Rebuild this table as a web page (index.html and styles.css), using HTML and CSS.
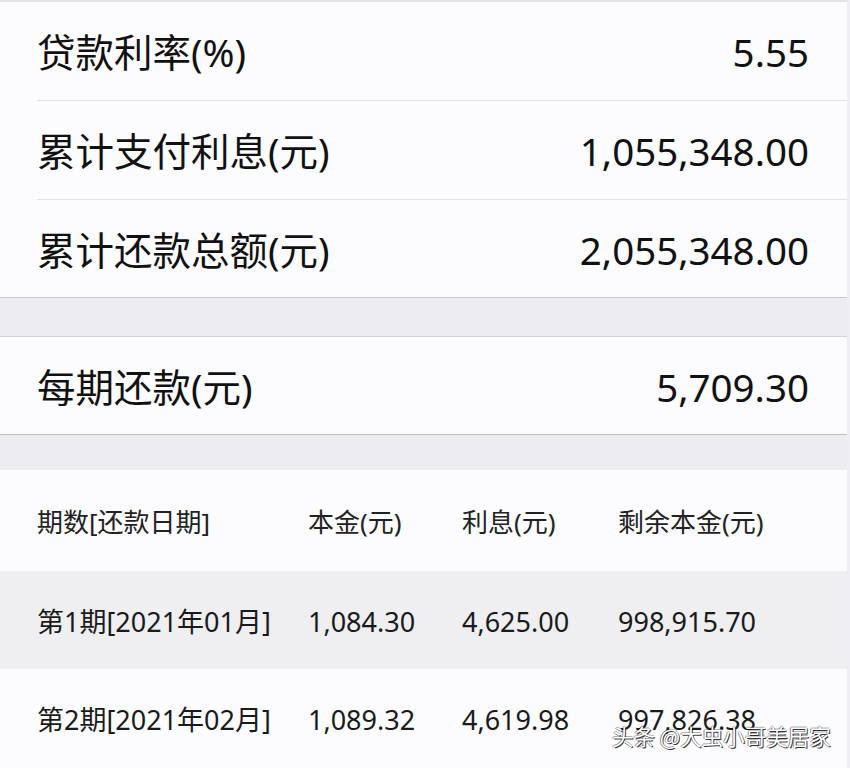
FILE: index.html
```html
<!DOCTYPE html>
<html lang="zh-CN">
<head>
<meta charset="utf-8">
<title>贷款计算结果</title>
<link rel="stylesheet" href="styles.css">
</head>
<body>
<div class="page">
  <section class="card card-top">
    <div class="row"><span class="label">贷款利率(%)</span><span class="value">5.55</span></div>
    <div class="row"><span class="label">累计支付利息(元)</span><span class="value">1,055,348.00</span></div>
    <div class="row last"><span class="label">累计还款总额(元)</span><span class="value">2,055,348.00</span></div>
  </section>
  <div class="gap gap-a"></div>
  <section class="card card-mid">
    <div class="row last"><span class="label">每期还款(元)</span><span class="value">5,709.30</span></div>
  </section>
  <div class="gap gap-b"></div>
  <section class="table">
    <div class="trow thead">
      <span>期数[还款日期]</span><span>本金(元)</span><span>利息(元)</span><span>剩余本金(元)</span>
    </div>
    <div class="trow shaded">
      <span>第1期[2021年01月]</span><span>1,084.30</span><span>4,625.00</span><span>998,915.70</span>
    </div>
    <div class="trow">
      <span>第2期[2021年02月]</span><span>1,089.32</span><span>4,619.98</span><span>997,826.38</span>
    </div>
  </section>
  <div class="watermark">头条 @大虫小哥美居家</div>
</div>
</body>
</html>
```
FILE: styles.css
```css
html, body {
  margin: 0;
  padding: 0;
  background: #fcfbfd;
}
body {
  font-family: "Noto Sans", "Noto Sans CJK SC", sans-serif;
  color: #111;
}
.page {
  position: relative;
  width: 847px;
  height: 768px;
  overflow: hidden;
  border-right: 3px solid #efeef2;
}
.card {
  background: #fcfbfd;
}
.card-top {
  border-top: 2px solid #e4e3e8;
  border-bottom: 1px solid #c9c8cd;
}
.card-mid {
  border-bottom: 1px solid #bdbcc1;
}
.row {
  margin-left: 37px;
  padding: 3px 38px 0 0;
  box-sizing: border-box;
  height: 99px;
  display: flex;
  align-items: center;
  justify-content: space-between;
  border-bottom: 1px solid #e2e1e6;
  font-size: 38.5px;
  line-height: 1;
}
.row.last {
  border-bottom: none;
  height: 97px;
}
.card-mid .row {
  height: 97px;
}
.gap {
  background: #edecf1;
}
.gap-a {
  height: 38px;
  border-bottom: 1px solid #d3d2d7;
}
.gap-b {
  height: 35px;
}
.table {
  background: #fcfbfd;
}
.trow {
  display: grid;
  grid-template-columns: 271px 154px 156px 1fr;
  align-items: center;
  padding: 3px 0 0 37px;
  box-sizing: border-box;
  height: 98px;
  font-size: 27px;
  line-height: 1;
  color: #1a1a1a;
}
.trow.thead {
  height: 101px;
  font-size: 26px;
  color: #222;
}
.trow.shaded {
  background: #efeef1;
}
.watermark {
  position: absolute;
  left: 612px;
  top: 725px;
  font-family: "Noto Sans CJK SC", sans-serif;
  font-size: 21.5px;
  line-height: 1;
  color: #ffffff;
  text-shadow: 1px 1px 0 rgba(0,0,0,0.8), -1px 0 0 rgba(0,0,0,0.45), 0 -1px 0 rgba(0,0,0,0.3);
}
```
